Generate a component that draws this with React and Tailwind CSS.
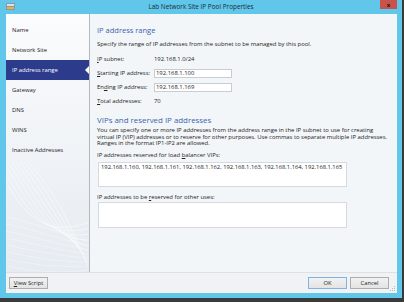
import React from "react";

const F = { fontFamily: '"Open Sans", "Noto Sans", sans-serif' };

function NavItem({ label, selected }) {
  if (selected) {
    return (
      <div className="relative h-[20px] flex items-center pl-[6px] bg-[#2c3b8c] text-white text-[5.9px]">
        {label}
        <div className="absolute right-0 top-[6px] w-0 h-0 border-y-[4px] border-y-transparent border-r-[4px] border-r-white" />
      </div>
    );
  }
  return (
    <div className="h-[20px] flex items-center pl-[6px] text-[#222] text-[5.9px]">{label}</div>
  );
}

function U({ children }) {
  return <span className="underline underline-offset-[1px]">{children}</span>;
}

function Btn({ children, primary, w = "w-[39px]" }) {
  return (
    <div
      className={`${w} h-[12px] flex items-center justify-center text-[5.8px] text-[#222] bg-gradient-to-b from-[#f2f2f2] to-[#e3e3e3] border ${
        primary ? "border-[#7fb3e6]" : "border-[#adadad]"
      }`}
    >
      <span>{children}</span>
    </div>
  );
}

export default function App() {
  return (
    <div className="w-[404px] h-[302px] bg-[#3a3a3a] overflow-hidden" style={F}>
      <div className="w-[402px] h-[298px] bg-[#60c7eb] flex flex-col">
        {/* title bar */}
        <div className="relative h-[14px] flex items-center justify-center shrink-0">
          <svg className="absolute left-[6px] top-[3px]" width="9" height="7" viewBox="0 0 9 7">
            <rect x="0" y="0" width="9" height="7" fill="#8a98a8" />
            <rect x="1" y="1" width="7" height="2" fill="#d9e2ea" />
            <rect x="1" y="4" width="7" height="2" fill="#e7b531" />
          </svg>
          <span className="text-[6.4px] text-[#1b2a33]">Lab Network Site IP Pool Properties</span>
          <div className="absolute right-[5px] top-0 w-[17px] h-[9px] bg-[#c8524c] flex items-center justify-center">
            <span className="text-[6px] font-bold text-[#2a1414] leading-none">x</span>
          </div>
        </div>
        {/* client */}
        <div className="ml-[6px] mr-[5px] h-[279px] flex flex-col bg-[#f3f6f9] shrink-0">
          <div className="flex h-[258px]">
            {/* nav */}
            <div className="relative w-[84px] shrink-0 border-r border-r-[#b4b8bd] bg-gradient-to-b from-[#fbfcfd] to-[#e6ebf1] pt-[6px] overflow-hidden">
              <svg className="absolute left-0 bottom-0" width="84" height="110" viewBox="0 0 84 110">
                {Array.from({ length: 9 }).map((_, i) => (
                  <path
                    key={i}
                    d={`M ${-10 + i * 4} 0 C ${10 + i * 6} 40, ${30 + i * 5} 80, ${84} ${60 + i * 6}`}
                    stroke="#ffffff"
                    strokeOpacity="0.8"
                    strokeWidth="0.6"
                    fill="none"
                  />
                ))}
                {Array.from({ length: 8 }).map((_, i) => (
                  <path
                    key={"h" + i}
                    d={`M 0 ${55 + i * 7} C 25 ${60 + i * 7}, 50 ${70 + i * 6}, 84 ${80 + i * 4}`}
                    stroke="#ffffff"
                    strokeOpacity="0.6"
                    strokeWidth="0.5"
                    fill="none"
                  />
                ))}
              </svg>
              <div className="relative">
                <NavItem label="Name" />
                <NavItem label="Network Site" />
                <NavItem label="IP address range" selected />
                <NavItem label="Gateway" />
                <NavItem label="DNS" />
                <NavItem label="WINS" />
                <NavItem label="Inactive Addresses" />
              </div>
            </div>
            {/* main */}
            <div className="flex-1 pl-[7px] text-[#222] text-[5.9px] flex flex-col">
              <div className="mt-[12px] h-[10px] flex items-center text-[7.5px] text-[#3d62ad] whitespace-nowrap">
                IP address range
              </div>
              <div className="mt-[4px] h-[8px] flex items-center whitespace-nowrap">
                <span>Specify the range of IP addresses from the subnet to be managed by this pool.</span>
              </div>
              <div className="mt-[6px] flex flex-col gap-[4px]">
                <div className="h-[10px] flex items-center">
                  <span className="w-[57px]"><U>I</U>P subnet:</span>
                  <span>192.168.1.0/24</span>
                </div>
                <div className="h-[10px] flex items-center">
                  <span className="w-[57px]"><U>S</U>tarting IP address:</span>
                  <div className="w-[78px] h-[9px] bg-white border border-[#c9cdd2] flex items-center pl-[1px]">192.168.1.100</div>
                </div>
                <div className="h-[10px] flex items-center">
                  <span className="w-[57px]">En<U>d</U>ing IP address:</span>
                  <div className="w-[78px] h-[9px] bg-white border border-[#c9cdd2] flex items-center pl-[1px]">192.168.1.169</div>
                </div>
                <div className="h-[10px] flex items-center">
                  <span className="w-[57px]"><U>T</U>otal addresses:</span>
                  <span>70</span>
                </div>
              </div>
              <div className="mt-[10px] h-[10px] flex items-center text-[7.9px] text-[#3d62ad] whitespace-nowrap">
                VIPs and reserved IP addresses
              </div>
              <div className="leading-[6.7px] whitespace-nowrap mt-[1px]">
                <div>You can specify one or more IP addresses from the address range in the IP subnet to use for creating</div>
                <div>virtual IP (VIP) addresses or to reserve for other purposes. Use commas to separate multiple IP addresses.</div>
                <div>Ranges in the format IP1-IP2 are allowed.</div>
              </div>
              <div className="mt-[4px] h-[8px] flex items-center whitespace-nowrap">
                <span>IP addresses reserved for load <U>b</U>alancer VIPs:</span>
              </div>
              <div className="mt-[3px] ml-[1px] w-[249px] h-[25px] bg-white border border-[#d6dade] px-[2px] pt-[1px] whitespace-nowrap leading-[7px] text-[5.8px]">
                192.168.1.160, 192.168.1.161, 192.168.1.162, 192.168.1.163, 192.168.1.164, 192.168.1.165
              </div>
              <div className="mt-[6px] h-[8px] flex items-center whitespace-nowrap">
                <span>IP addresses to be <U>r</U>eserved for other uses:</span>
              </div>
              <div className="mt-[1px] ml-[1px] w-[249px] h-[26px] bg-white border border-[#d6dade]" />
            </div>
          </div>
          {/* footer */}
          <div className="relative h-[21px] border-t border-t-[#dde1e5] bg-[#f0f2f4] flex items-start pt-[4px] pl-[3px] pr-[8px]">
            <Btn><U>V</U>iew Script</Btn>
            <div className="flex-1" />
            <div className="flex gap-[3px]">
              <Btn primary>OK</Btn>
              <Btn>Cancel</Btn>
            </div>
            <svg className="absolute right-[1px] bottom-[1px]" width="6" height="6" viewBox="0 0 6 6">
              <rect x="4" y="0" width="1" height="1" fill="#b8b8b8" />
              <rect x="2" y="2" width="1" height="1" fill="#b8b8b8" />
              <rect x="4" y="2" width="1" height="1" fill="#b8b8b8" />
              <rect x="0" y="4" width="1" height="1" fill="#b8b8b8" />
              <rect x="2" y="4" width="1" height="1" fill="#b8b8b8" />
              <rect x="4" y="4" width="1" height="1" fill="#b8b8b8" />
            </svg>
          </div>
        </div>
      </div>
    </div>
  );
}
